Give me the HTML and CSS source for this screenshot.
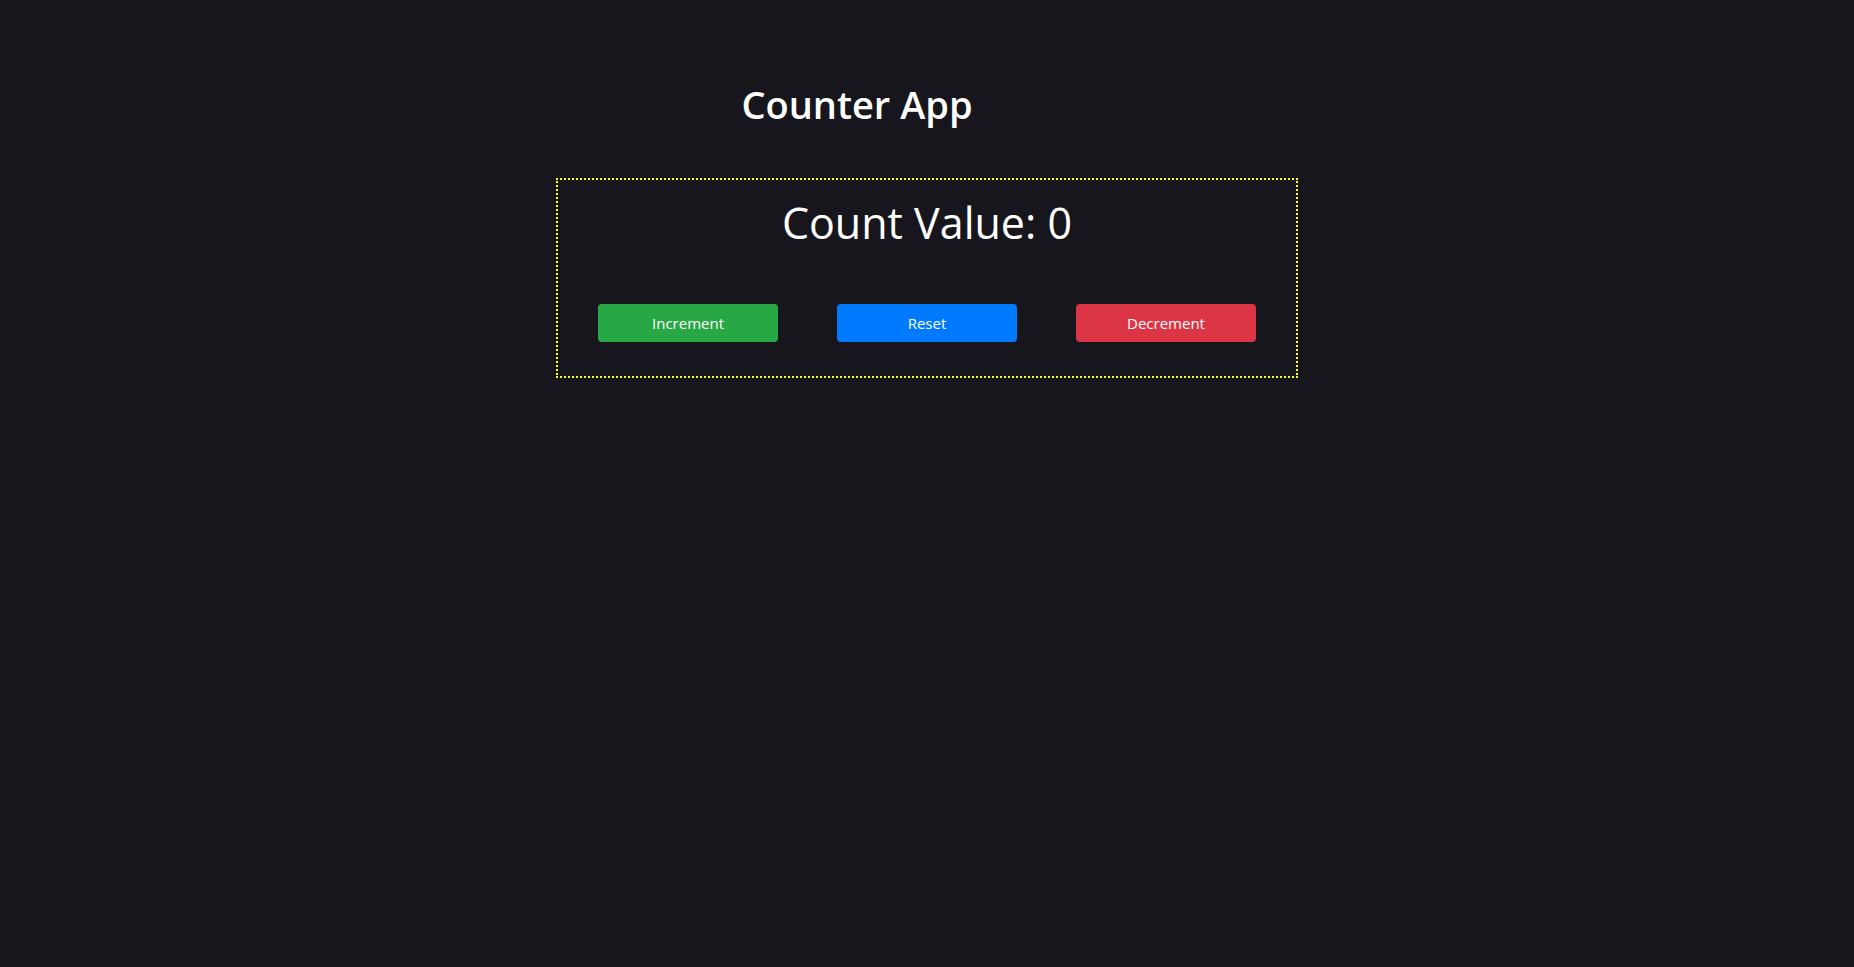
FILE: index.html
```html
<!DOCTYPE html>
<html lang="en">
<head>
<meta charset="utf-8">
<title>Counter App</title>
<link rel="stylesheet" href="styles.css">
</head>
<body>
  <div class="app">
    <h1 class="title">Counter App</h1>
    <div class="counter">
      <h2 class="count">Count Value: 0</h2>
      <div class="buttons">
        <button class="btn btn-inc">Increment</button>
        <button class="btn btn-reset">Reset</button>
        <button class="btn btn-dec">Decrement</button>
      </div>
    </div>
  </div>
</body>
</html>
```

FILE: styles.css
```css
html, body {
  margin: 0;
  padding: 0;
  background: #17161c;
  height: 100%;
}
body {
  font-family: "Open Sans", "Noto Sans", sans-serif;
  color: #ffffff;
}
.app {
  display: flex;
  flex-direction: column;
  align-items: center;
}
.title {
  align-self: stretch;
  margin: 80px 0 0 0;
  padding-right: 140px;
  text-align: center;
  font-size: 38px;
  line-height: 48px;
  font-weight: 600;
}
.counter {
  margin-top: 50px;
  width: 738px;
  border: 2px dotted #ffff00;
  padding: 15px 0 34px;
  display: flex;
  flex-direction: column;
  align-items: center;
}
.count {
  margin: 0;
  font-size: 43px;
  line-height: 56px;
  font-weight: 400;
}
.buttons {
  margin-top: 53px;
  display: flex;
  gap: 59px;
}
.btn {
  width: 180px;
  height: 38px;
  border: none;
  border-radius: 4px;
  color: #ffffff;
  font-family: "Open Sans", "Noto Sans", sans-serif;
  font-size: 15px;
  cursor: pointer;
}
.btn-inc { background: #28a745; }
.btn-reset { background: #007bff; }
.btn-dec { background: #dc3545; }
```
